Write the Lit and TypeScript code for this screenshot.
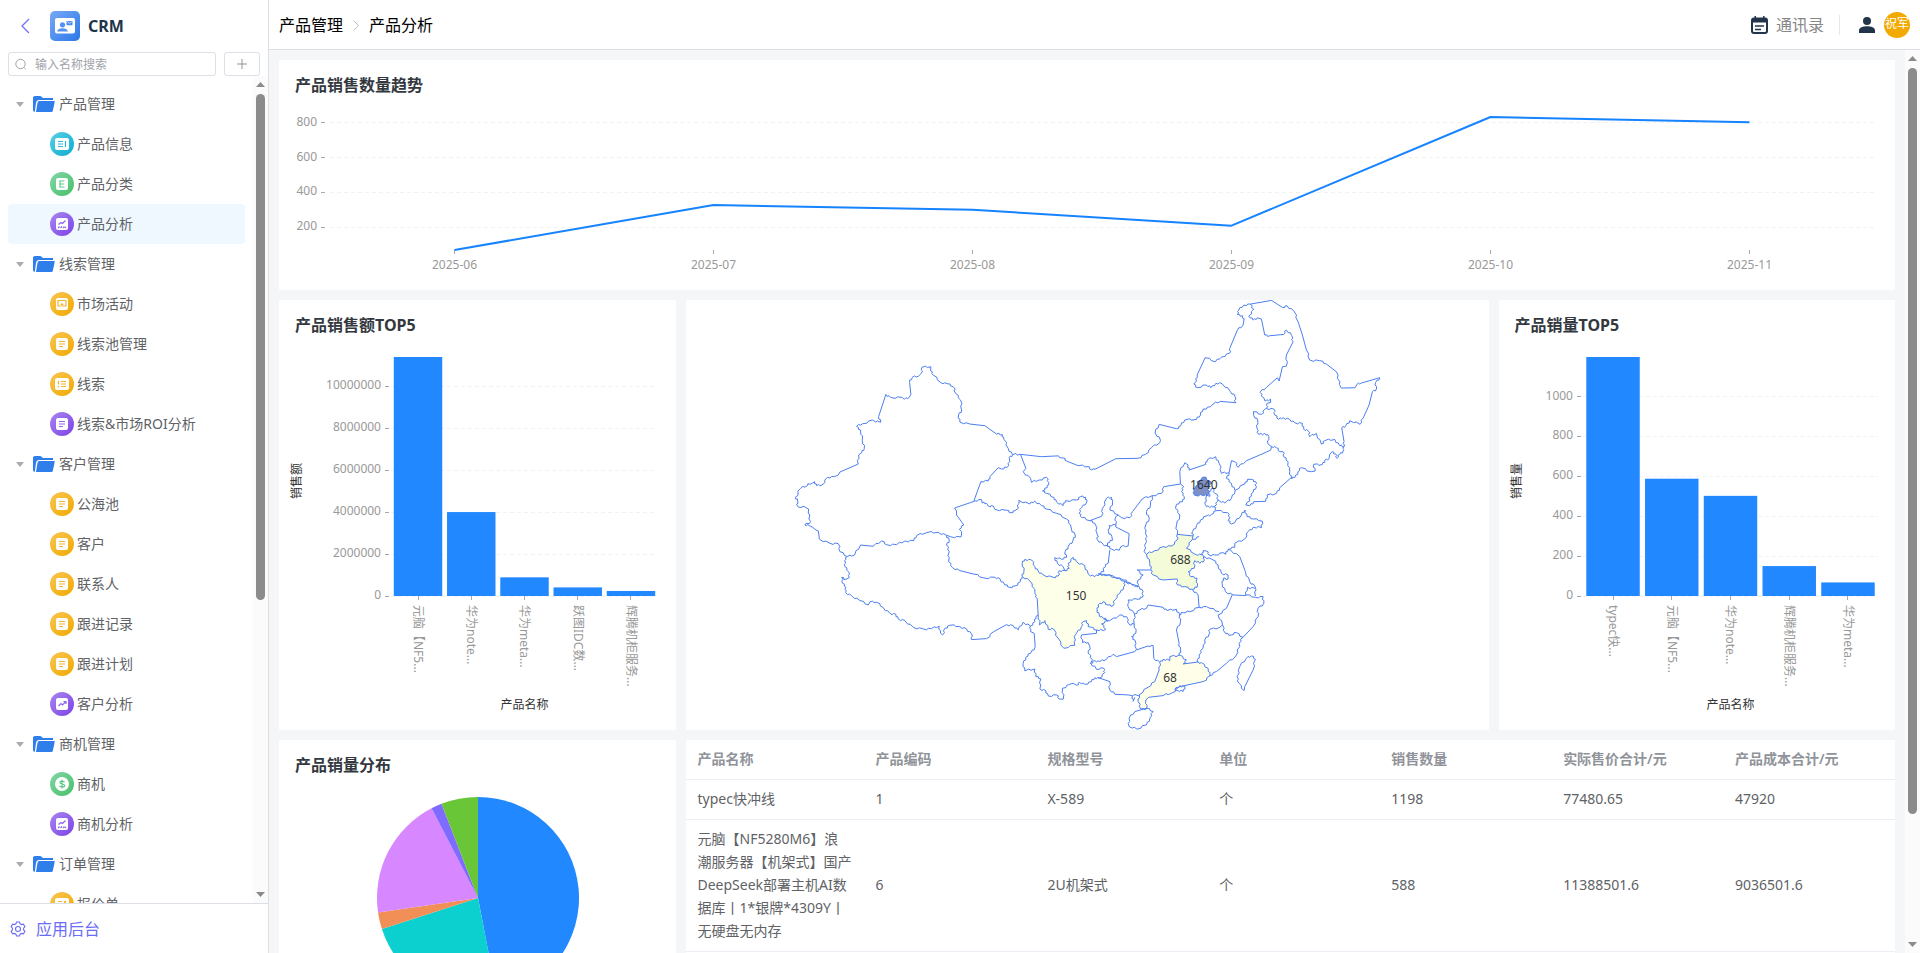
import { LitElement, html, svg, css } from "lit";
import { customElement, property, state } from "lit/decorators.js";
import { classMap } from "lit/directives/class-map.js";

/* ---------- shared chart base: tracks its own size ---------- */

class SizedChart extends LitElement {
  @state() w = 0;
  @state() h = 0;
  private ro?: ResizeObserver;

  connectedCallback() {
    super.connectedCallback();
    this.ro = new ResizeObserver(() => this.measure());
    this.ro.observe(this);
    requestAnimationFrame(() => this.measure());
  }
  disconnectedCallback() {
    this.ro?.disconnect();
    super.disconnectedCallback();
  }
  private measure() {
    this.w = this.clientWidth;
    this.h = this.clientHeight;
  }
}

const chartStyles = css`
  :host {
    display: block;
    flex: 1;
    min-height: 0;
    overflow: hidden;
  }
  svg {
    display: block;
    width: 100%;
    height: 100%;
  }
  text {
    font-size: 12px;
    fill: #999;
  }
  .name {
    fill: #333;
  }
  .grid {
    stroke: #f2f2f2;
    stroke-dasharray: 4 3;
  }
  .tick {
    stroke: #aaa;
  }
  .bar {
    fill: #2288ff;
  }
  .line {
    fill: none;
    stroke: #1683ff;
    stroke-width: 2;
    stroke-linejoin: round;
  }
`;

const crisp = (n: number) => Math.floor(n) + 0.5;

@customElement("trend-chart")
class TrendChart extends SizedChart {
  static styles = chartStyles;
  private months = ["2025-06", "2025-07", "2025-08", "2025-09", "2025-10", "2025-11"];
  private values = [68, 327, 300, 208, 834, 804];

  render() {
    if (!this.w) return html``;
    const left = 46;
    const right = this.w - 16;
    const top = 7;
    const base = this.h - 40;
    const max = Math.max(...this.values);
    const min = Math.min(...this.values);
    const y = (v: number) => top + ((max - v) * (base - top)) / (max - min);
    const step = (right - left) / this.months.length;
    const x = (i: number) => left + step * (i + 0.5);
    return html`<svg role="img" aria-label="产品销售数量趋势">
      ${[200, 400, 600, 800].map(
        (v) => svg`
          <line class="grid" x1=${left + 5} x2=${right - 4} y1=${crisp(y(v))} y2=${crisp(y(v))}></line>
          <line class="tick" x1=${left - 4} x2=${left} y1=${crisp(y(v))} y2=${crisp(y(v))}></line>
          <text x=${left - 8} y=${Math.round(y(v)) + 3} text-anchor="end">${v}</text>`
      )}
      ${this.months.map(
        (m, i) => svg`
          <line class="tick" x1=${crisp(x(i))} x2=${crisp(x(i))} y1=${base} y2=${base + 4}></line>
          <text x=${x(i)} y=${base + 19} text-anchor="middle">${m}</text>`
      )}
      <polyline class="line" points=${this.values.map((v, i) => `${x(i)},${y(v)}`).join(" ")}></polyline>
    </svg>`;
  }
}

interface Item {
  name: string;
  value: number;
}

@customElement("bar-chart")
class BarChart extends SizedChart {
  static styles = chartStyles;
  @property({ attribute: false }) items: Item[] = [];
  @property({ attribute: false }) ticks: number[] = [];
  @property({ type: Number }) inset = 110;
  @property() unit = "";

  render() {
    if (!this.w) return html``;
    const left = this.inset;
    const right = this.w - 16;
    const top = 7;
    const base = this.h - 134;
    const max = Math.max(...this.items.map((d) => d.value));
    const y = (v: number) => base - ((base - top) * v) / max;
    const pad = 0.09;
    const step = (right - left) / (this.items.length + pad);
    const mid = Math.round((base + top) / 2) + 4;
    return html`<svg role="img" aria-label=${this.unit}>
      ${this.ticks.map(
        (v) => svg`
          <line class="grid" x1=${left + 2} x2=${right - 2} y1=${crisp(y(v))} y2=${crisp(y(v))}></line>
          <line class="tick" x1=${left - 4} x2=${left} y1=${crisp(y(v))} y2=${crisp(y(v))}></line>
          <text x=${left - 8} y=${Math.round(y(v)) + 3} text-anchor="end">${v}</text>`
      )}
      ${this.items.map((d, i) => {
        const x = left + step * (i + pad);
        const bw = step * (1 - pad);
        const c = x + bw / 2;
        return svg`
          <rect class="bar" x=${x} y=${y(d.value)} width=${bw} height=${base - y(d.value)}></rect>
          <line class="tick" x1=${crisp(c)} x2=${crisp(c)} y1=${base} y2=${base + 4}></line>
          <text transform="translate(${Math.round(c) - 4} ${base + 9}) rotate(90)">${d.name}</text>`;
      })}
      <text class="name" transform="translate(22 ${mid}) rotate(-90)" text-anchor="middle">${this.unit}</text>
      <text class="name" x=${(left + right) / 2} y=${base + 113} text-anchor="middle">产品名称</text>
    </svg>`;
  }
}

@customElement("pie-chart")
class PieChart extends SizedChart {
  static styles = chartStyles;
  private slices: [number, string][] = [
    [1198, "#2288ff"],
    [588, "#0ccfcf"],
    [68, "#f18f56"],
    [502, "#d787ff"],
    [44, "#7f6bff"],
    [150, "#69c637"],
  ];

  render() {
    if (!this.w) return html``;
    const r = 101;
    const cx = Math.round(this.w / 2);
    const cy = 108;
    const total = this.slices.reduce((s, [v]) => s + v, 0);
    let acc = 0;
    const at = (v: number) => {
      const a = (v / total) * Math.PI * 2;
      return `${(cx + r * Math.sin(a)).toFixed(2)} ${(cy - r * Math.cos(a)).toFixed(2)}`;
    };
    return html`<svg role="img" aria-label="产品销量分布">
      ${this.slices.map(([v, color]) => {
        const from = at(acc);
        acc += v;
        return svg`<path fill=${color} d="M${cx} ${cy}L${from}A${r} ${r} 0 ${v > total / 2 ? 1 : 0} 1 ${at(acc)}Z"></path>`;
      })}
    </svg>`;
  }
}

/* ---------- map of provinces ---------- */

/* Every sheet holds border lines in its own coordinates, shifted by dx, dy. */
const sheets: { dx: number; dy: number; lines: string[] }[] = [
  {
    dx: 0,
    dy: 0,
    lines: [
      "117,720 115,708 108,705 98,697 88,692 75,690 78,685 88,686 92,680 87,672 86,642 78,638 72,634 60,638 53,634 53,618 46,607 54,601 54,588 62,580 82,572 84,566 90,568 98,564 104,560 110,572 126,570 142,547 163,545 175,540 180,531 235,507 236,480 246,472 253,461 247,436 242,405 230,394 248,386 278,375 302,382 296,365 318,298 332,307 367,307 373,313 388,307 393,298 389,262 397,247 416,243 424,235 426,217 453,215 452,227 460,240 482,262 502,266 520,275 527,295 542,315 545,345 536,360 540,381 570,387 615,392 650,417 668,419 672,433 685,460 698,479 722,478 785,485 825,483 850,489 860,498 895,512 928,515 930,522 945,523",
      "698,479 688,488 690,500 682,517 665,522 655,518 630,545 625,558 603,560 583,615 583,619 524,639 530,648 530,660 552,690 538,703 545,710 545,720",
      "583,617 605,614 607,624 620,625 625,633 640,633 645,643 680,646 693,653 705,647 715,640 717,616 750,627 765,618 785,632 800,642 830,655 860,672 872,690 875,702 886,720",
      "722,478 738,520 730,530 752,550 755,562 778,555 800,547 806,562 802,578 788,588 800,595 823,608 830,620 850,632 857,617 890,615 902,605 918,607 921,620 905,638 898,655 905,667 930,677 965,664 968,640 980,610 995,607 998,620 990,645 1015,660",
      "930,677 945,685 953,720 952,733 970,748 983,754",
    ],
  },
  {
    dx: 900,
    dy: 0,
    lines: [
      "45,523 108,491 172,490 197,478 215,458 240,443 242,436 226,414 238,388 290,401 303,392 315,375 350,373 362,360 370,342 392,335 400,327 422,319 468,323 466,305 452,290 427,266 408,265 393,278 380,270 354,278 342,267 350,258 352,240 376,188 407,200 425,186 450,174 450,160 472,107 490,90 492,78 488,62 472,58 477,45 492,30 512,27 575,16 608,37 622,32 642,48 655,80 668,120 680,165 690,195 720,197 740,207 770,230 775,240 773,250 785,279 826,278 832,268 845,264 900,248 888,262 890,282 878,290 868,330 850,370 841,388 810,377 798,392 786,398 793,440 793,455 790,468 780,478 772,490 768,477 757,470 750,478 748,490 735,496 728,508 702,508 706,528 695,530 665,518 655,530 645,548 632,550 600,578 590,595 562,600 558,619 522,620 510,632 498,630 502,622 510,618 508,608 520,592 530,575 528,560 515,553 503,553 495,567 466,586 455,610 440,620 425,622 415,615 412,598 405,595 400,580 388,590",
      "388,590 390,604 380,600 378,612 376,628 390,638 405,633 412,620 415,615",
      "115,660 125,668 150,668 158,650 187,612 217,602 245,595 252,575 302,567",
      "115,660 108,665 108,690 88,692 86,710 96,724 98,736 83,744 83,754 95,762 118,766 123,755 145,753 148,716 108,696 108,690",
      "217,602 212,630 200,650 208,670 198,690 197,715 200,740 193,770 200,778",
      "302,567 312,575 305,590 313,605 308,620 290,628 287,640 300,660 290,690 293,718",
      "302,567 300,530 315,503 325,510 328,525 378,508 382,495 408,485 418,505 425,535 448,533 440,550 455,565 466,586",
      "448,533 455,497 465,500 475,517 500,497 540,480 573,465 575,455",
      "575,453 590,458 600,470 610,470 612,485 625,500 630,530 635,550",
      "575,455 565,447 567,425 555,415 537,418 532,400 534,378 522,362 521,350 545,358 555,343 560,340",
      "560,340 562,325 573,322 572,312 556,318 552,308 541,292 560,277 593,248 598,258 608,215 620,213 620,180 640,140 636,122 620,105 612,118 570,122 555,120 545,72 533,68 520,75 507,63 522,42 512,27",
      "560,340 582,342 585,360 597,373 610,368 630,373 645,383 668,385 672,402 685,407 690,425 710,415 725,447 735,437 765,433 780,452 793,455",
      "402,635 410,647 395,658 380,663 362,675 350,692 338,710 340,723",
      "410,647 443,653 450,668 445,677 455,687 465,683 485,660 496,645 502,665 520,672 547,678 545,698 520,697 505,710 497,730 465,745 465,757 445,763",
    ],
  },
  {
    dx: 0,
    dy: 615,
    lines: [
      "117,105 118,117 150,130 175,131 180,155 202,170 224,165 242,135 280,139 305,123 320,134 350,134 375,123 402,122 410,107 440,98 475,97 500,106 512,110 543,111 545,105",
      "500,106 508,120 500,135 508,155 506,185 518,203 540,212 580,222 612,234 645,232 660,236 675,255 690,262 705,258 722,245 727,230",
      "202,170 194,182 195,200 205,215 208,233 198,238 185,232 188,250 198,262 197,278 215,287 240,302 265,315 270,306 290,307 310,323 330,340 348,343 355,357 375,362 400,382 430,387 455,386 478,379 482,400 488,405 495,385 510,376 540,380 560,387 575,402 575,419 620,416 640,396 680,374 700,377 715,390 730,367 752,378 765,365 768,350 775,345",
      "886,105 880,120 865,140 856,155 860,172 845,178 825,173 833,190 850,200 855,212",
      "752,378 752,395 763,400 766,440 752,460 738,472 730,490 735,513 765,507 768,530 783,537 780,567 798,572 805,588 830,585 838,597 850,598 848,565 870,553 880,550 890,556 900,547 915,553 935,545 945,533 958,535 975,518 972,505 950,508 932,490",
      "950,390 950,400 905,405 908,428 925,428 930,440 925,460 938,480 932,490 945,482 960,485",
    ],
  },
  {
    dx: 900,
    dy: 615,
    lines: [
      "137,245 160,255 178,260 190,275 188,292 175,298 145,300 145,320 163,340 163,372 150,375 140,350 120,345 90,362 72,358",
      "60,485 80,478 100,463 110,470 165,455 170,448 165,420 155,410 168,400 163,372",
      "163,343 180,330 200,325 205,315 250,322 262,332 290,328 300,345 302,365 290,390 298,430 302,450 298,466",
      "170,450 205,438 220,437 222,475 240,487",
      "172,262 175,240 190,225 172,210 213,210",
      "338,268 355,285 358,322 330,335 310,338 298,345",
      "358,322 380,320 390,325 418,335",
      "90,150 85,190 70,205 72,215 55,222 65,222 100,228 130,240 150,248 172,260",
      "340,118 358,110",
      "368,165 370,152 380,153 388,165 405,165 430,158 438,163 445,148 452,150 480,170 497,215 510,245 525,258 527,288",
      "370,168 400,180 415,195 425,220 445,225 445,237 430,235 427,250 437,275 460,285 498,287 503,262 525,265",
      "498,285 527,292 550,290 552,310 535,325 535,350 520,380 490,412 470,398 455,405 437,400 428,375 415,345 440,325 458,283",
      "428,375 420,382 390,388 388,402 375,420 370,445 358,465 352,487",
      "490,412 478,430 480,440 468,468 440,490 410,515 390,528",
      "178,588 145,585 105,583 90,570 90,545 55,533",
      "158,588 160,604 165,592",
      "148,655 165,635 200,625 220,635 210,655 200,675 172,688 148,680 148,655",
      "515,468 527,478 520,510 495,560 493,572 478,550 472,530 480,500 500,475 515,468",
      "285,570 300,557 315,560 310,575 293,572 285,570",
    ],
  },
];

const regions: { fill: string; dx: number; dy: number; line: string }[] = [
  {
    fill: "#feffe9",
    dx: 0,
    dy: 615,
    line: "727,230 732,215 727,190 735,178 755,180 765,200 775,213 790,225 820,232 835,228 838,212 855,212 868,205 865,190 880,172 890,185 915,197 925,222 945,230 960,223 980,225 1005,233 1037,245 1032,260 1020,280 1005,300 1000,317 985,315 970,305 955,315 952,330 958,345 970,355 985,362 965,372 978,388 970,392 950,390 935,382 925,380 920,362 910,365 905,380 890,400 883,410 885,436 852,445 835,415 822,388 805,388 795,362 783,372 779,375 775,345 772,295 765,280 765,268 750,243 727,230",
  },
  {
    fill: "#f4fbd9",
    dx: 900,
    dy: 615,
    line: "200,163 225,152 250,140 275,138 292,120 292,103 340,108 337,120 320,145 345,162 368,165 374,180 360,190 345,182 343,205 325,215 333,230 352,235 352,262 338,268 315,260 293,255 292,237 250,240 220,225 213,208 210,190 200,163",
  },
  {
    fill: "#fffee8",
    dx: 900,
    dy: 615,
    line: "240,487 238,510 225,545 205,562 178,585 175,605 183,628 200,627 198,600 207,592 250,587 275,580 300,560 370,545 390,528 385,505 365,488 350,487 310,492 320,480 300,465 270,470 270,482 250,478 240,487",
  },
  {
    fill: "#7c90c6",
    dx: 900,
    dy: 0,
    line: "340,580 355,570 352,560 362,556 368,547 378,546 382,556 394,560 388,574 386,598 372,602 345,601 340,580",
  },
];

/* Breaks longer straight pieces with a small zigzag, so borders read as natural ones. */
function roughen(line: string, dx: number, dy: number): string {
  const pts = line.split(" ").map((p) => p.split(",").map(Number));
  let d = `M${pts[0][0] + dx} ${pts[0][1] + dy}`;
  for (let i = 1; i < pts.length; i++) {
    const [x0, y0] = pts[i - 1];
    const [x1, y1] = pts[i];
    const len = Math.hypot(x1 - x0, y1 - y0);
    if (len > 13 && len < 36) {
      const side = (x0 * 7 + y0 * 13 + i) % 2 ? 3 : -3;
      const nx = (-(y1 - y0) * side) / len;
      const ny = ((x1 - x0) * side) / len;
      const ax = x0 + (x1 - x0) * 0.4 + nx + dx;
      const ay = y0 + (y1 - y0) * 0.4 + ny + dy;
      const bx = x0 + (x1 - x0) * 0.6 - nx / 2 + dx;
      const by = y0 + (y1 - y0) * 0.6 - ny / 2 + dy;
      d += `L${ax.toFixed(1)} ${ay.toFixed(1)}L${bx.toFixed(1)} ${by.toFixed(1)}`;
    }
    d += `L${x1 + dx} ${y1 + dy}`;
  }
  return d;
}

const mapLabels: [string, number, number][] = [
  ["1640", 1272, 570],
  ["688", 1202, 795],
  ["150", 889, 901],
  ["68", 1171, 1147],
];

@customElement("province-map")
class ProvinceMap extends LitElement {
  static styles = css`
    :host {
      display: block;
      flex: 1;
      min-height: 0;
    }
    svg {
      display: block;
      width: 100%;
      height: 100%;
    }
    path {
      fill: none;
      stroke: #4a7df0;
      stroke-width: 3;
      stroke-linejoin: round;
    }
    text {
      font-size: 36px;
      fill: #333;
      text-anchor: middle;
    }
  `;
  render() {
    return html`<svg viewBox="-282 15 2410 1290" role="img" aria-label="销售区域地图">
      ${regions.map((r) => svg`<path style="fill:${r.fill}" d=${roughen(r.line, r.dx, r.dy)}></path>`)}
      ${sheets.map((s) => svg`<path d=${s.lines.map((l) => roughen(l, s.dx, s.dy)).join("")}></path>`)}
      ${mapLabels.map(([t, x, y]) => svg`<text x=${x} y=${y + 13}>${t}</text>`)}
    </svg>`;
  }
}

/* ---------- navigation ---------- */

type Glyph = "info" | "class" | "area" | "market" | "doc" | "list" | "rise" | "dollar" | "quote";
interface Node {
  label: string;
  tone?: "cyan" | "green" | "purple" | "amber";
  glyph?: Glyph;
  active?: boolean;
}

const tree: Node[] = [
  { label: "产品管理" },
  { label: "产品信息", tone: "cyan", glyph: "info" },
  { label: "产品分类", tone: "green", glyph: "class" },
  { label: "产品分析", tone: "purple", glyph: "area", active: true },
  { label: "线索管理" },
  { label: "市场活动", tone: "amber", glyph: "market" },
  { label: "线索池管理", tone: "amber", glyph: "doc" },
  { label: "线索", tone: "amber", glyph: "list" },
  { label: "线索&市场ROI分析", tone: "purple", glyph: "doc" },
  { label: "客户管理" },
  { label: "公海池", tone: "amber", glyph: "doc" },
  { label: "客户", tone: "amber", glyph: "doc" },
  { label: "联系人", tone: "amber", glyph: "doc" },
  { label: "跟进记录", tone: "amber", glyph: "doc" },
  { label: "跟进计划", tone: "amber", glyph: "doc" },
  { label: "客户分析", tone: "purple", glyph: "rise" },
  { label: "商机管理" },
  { label: "商机", tone: "green", glyph: "dollar" },
  { label: "商机分析", tone: "purple", glyph: "area" },
  { label: "订单管理" },
  { label: "报价单", tone: "amber", glyph: "quote" },
];

const box = svg`<rect x="6" y="6" width="12" height="12" rx="2" fill="#fff" stroke="none"></rect>`;
const wide = svg`<rect x="5" y="6" width="14" height="12" rx="2" fill="#fff" stroke="none"></rect>`;
const glyphs: Record<Glyph, unknown> = {
  info: svg`${wide}<path d="M8 9.500h5M8 12h5M8 14.500h5M15.500 9v6"></path>`,
  class: svg`${box}<path d="M14.500 9h-4.500v6h4.500M10 12h4"></path>`,
  area: svg`${box}<path d="M8.500 12.500l2.500-2 1.500 1 3-3M8 16l1.500-1.500M10.500 16l1.500-1.500M13 16l1.500-1.500M15 16l1-1"></path>`,
  market: svg`${box}<path d="M8 8.500h8v5.500h-8z"></path><path d="M10.500 13c0-2.200 3-2.200 3 0z" fill="currentColor" stroke="none"></path>`,
  doc: svg`${box}<path d="M9 9.500h6M9 12h6M9 14.500h4"></path>`,
  list: svg`${wide}<path d="M8.500 9v3.500M8.500 14v1.500M11 9.500h5M11 12h5M11 14.500h5"></path>`,
  rise: svg`${box}<path d="M8.500 14l2.500-2.500 1.500 1.500 3-3M13.500 9.500h2.500v2.500"></path>`,
  dollar: svg`<circle cx="12" cy="12" r="7" fill="#fff" stroke="none"></circle><path d="M14.500 10.200c-.5-1.500-4.600-1.600-4.600.2 0 2 4.800 1.200 4.800 3.200 0 1.900-4.500 1.800-5.200.1M12 7.500v9"></path>`,
  quote: svg`${wide}<path d="M8 9.500h4M8 12h5M8 14.500h5M15.500 9v5M14 10.500l1.500-1.500"></path>`,
};

@customElement("side-nav")
class SideNav extends LitElement {
  static styles = css`
    :host {
      display: flex;
      flex-direction: column;
      width: 268px;
      flex: none;
      border-right: 1px solid #dcdfe6;
      background: #fff;
    }
    .brand {
      display: flex;
      align-items: center;
      height: 30px;
      padding: 11px 20px;
      font-size: 16px;
      font-weight: 700;
      color: #22344a;
    }
    button {
      font: inherit;
      background: none;
      border: 0;
      padding: 0;
      cursor: pointer;
    }
    .back {
      display: flex;
      width: 30px;
    }
    .brand h1 {
      margin: 0 0 0 8px;
      font-size: 16px;
      line-height: 24px;
    }
    .search {
      display: flex;
      gap: 8px;
      padding: 0 8px;
    }
    .field {
      display: flex;
      align-items: center;
      flex: 1;
      height: 22px;
      min-width: 0;
      border: 1px solid #dcdfe6;
      border-radius: 3px;
      padding: 0 6px;
      gap: 8px;
    }
    .field input {
      flex: 1;
      min-width: 0;
      border: 0;
      outline: 0;
      padding: 0;
      font: inherit;
      font-size: 12px;
      color: #606266;
      background: none;
    }
    .field input::placeholder {
      color: #a0a3a9;
    }
    .add {
      width: 36px;
      height: 24px;
      border: 1px solid #dcdfe6;
      border-radius: 3px;
      display: flex;
      align-items: center;
      justify-content: center;
    }
    .body {
      display: flex;
      flex: 1;
      min-height: 0;
    }
    ul {
      list-style: none;
      margin: 0;
      padding: 8px;
      flex: 1;
      overflow: hidden;
    }
    a {
      display: flex;
      align-items: center;
      height: 40px;
      font-size: 14px;
      color: #606266;
      text-decoration: none;
      border-radius: 4px;
      white-space: nowrap;
    }
    .label {
      padding-bottom: 2px;
    }
    .group {
      padding-left: 8px;
    }
    .caret {
      margin-right: 9px;
    }
    .folder {
      margin-right: 4px;
    }
    .leaf {
      padding-left: 42px;
      gap: 3px;
    }
    .active {
      background: #eff7ff;
    }
    .dot {
      width: 24px;
      height: 24px;
      border-radius: 50%;
      flex: none;
    }
    .dot svg {
      display: block;
      fill: none;
      stroke: currentColor;
      stroke-width: 1.2;
    }
    .cyan {
      background: linear-gradient(135deg, #5cd0e6, #0aacce);
      color: #2bbcd8;
    }
    .green {
      background: linear-gradient(135deg, #85d6a6, #45c068);
      color: #5cc882;
    }
    .purple {
      background: linear-gradient(135deg, #a986f0, #7c42e6);
      color: #9063ea;
    }
    .amber {
      background: linear-gradient(135deg, #f8c654, #f1a800);
      color: #f4b62c;
    }
    .foot {
      height: 49px;
      border-top: 1px solid #dcdfe6;
      padding-left: 10px;
      gap: 10px;
      color: #6a6cf6;
      font-size: 16px;
      border-radius: 0;
    }
  `;

  render() {
    return html`
      <header class="brand">
        <button class="back" aria-label="返回">
          <svg width="10" height="16" viewBox="0 0 10 16" fill="none" stroke="#7272f8" stroke-width="1.3">
            <path d="M9 1L2 8l7 7"></path>
          </svg>
        </button>
        <svg width="30" height="30" viewBox="0 0 30 30">
          <defs>
            <linearGradient id="lg" x1="0" y1="0" x2="1" y2="1">
              <stop offset="0" stop-color="#78a8f6"></stop>
              <stop offset="1" stop-color="#2b78e8"></stop>
            </linearGradient>
          </defs>
          <rect width="30" height="30" rx="5" fill="url(#lg)"></rect>
          <rect x="5" y="7" width="20" height="15.500" rx="2" fill="#fff"></rect>
          <circle cx="12.500" cy="13.800" r="2.600" fill="#5592f0"></circle>
          <path d="M7 20.500c.5-4.500 10.500-4.500 11 0z" fill="#5592f0"></path>
          <rect x="16.500" y="10" width="6" height="4.200" rx=".6" fill="#4a8aee"></rect>
          <path d="M17.300 10.800l2.200 1.500 2.200-1.500" fill="none" stroke="#fff" stroke-width=".7"></path>
        </svg>
        <h1>CRM</h1>
      </header>
      <div class="search">
        <label class="field">
          <svg width="12" height="12" viewBox="0 0 12 12" fill="none" stroke="#a0a3a9">
            <circle cx="5.500" cy="6" r="4.700"></circle>
            <path d="M8.800 9.300l2 2"></path>
          </svg>
          <input type="text" placeholder="输入名称搜索" aria-label="输入名称搜索" />
        </label>
        <button class="add" aria-label="新增">
          <svg width="10" height="10" viewBox="0 0 10 10" stroke="#909399"><path d="M5 0v10M0 5h10"></path></svg>
        </button>
      </div>
      <div class="body">
        <ul>
          ${tree.map(
            (n) => html`<li>
              ${n.glyph
                ? html`<a href="#" class=${classMap({ leaf: true, active: !!n.active })}>
                    <span class="dot ${n.tone}"><svg width="24" height="24">${glyphs[n.glyph]}</svg></span>
                    <span class="label">${n.label}</span>
                  </a>`
                : html`<a href="#" class="group">
                    <svg class="caret" width="8" height="5"><path d="M0 0h8l-4 5z" fill="#a8abb2"></path></svg>
                    <svg class="folder" width="22" height="16" fill="#2f7eea">
                      <path d="M2 0h5.500l2.500 2h10v2H6C4 4 3.500 5 3 7L1.800 15.800C.8 15.800 0 15 0 14V2C0 .800.800 0 2 0z"></path>
                      <path d="M6.500 5H21c.6 0 .8.500.7 1l-1.800 8.500c-.2 1-.9 1.500-1.900 1.500H3L4.600 6.500C4.800 5.500 5.500 5 6.500 5z"></path>
                    </svg>
                    <span class="label">${n.label}</span>
                  </a>`}
            </li>`
          )}
        </ul>
        <scroll-rail thumb="64%"></scroll-rail>
      </div>
      <a class="foot" href="#">
        <svg width="16" height="16" viewBox="0 0 16 16" fill="none" stroke="#6a6cf6" stroke-width="1.100">
          <path d="M6.500 1h3l.6 1.800 1.400.8 1.900-.4 1.500 2.500-1.300 1.500v1.600l1.300 1.500-1.500 2.500-1.900-.4-1.400.8L9.500 15h-3l-.6-1.800-1.400-.8-1.900.4-1.500-2.500 1.300-1.500V7.200L1.100 5.700l1.500-2.500 1.900.4 1.400-.8z"></path>
          <circle cx="8" cy="8" r="2.500"></circle>
        </svg>
        <span class="label">应用后台</span>
      </a>
    `;
  }
}

@customElement("scroll-rail")
class ScrollRail extends LitElement {
  static styles = css`
    :host {
      display: flex;
      flex-direction: column;
      align-items: center;
      width: 15px;
      flex: none;
      background: #fbfbfb;
      padding: 6px 0;
      box-sizing: border-box;
    }
    .track {
      flex: 1;
      margin: 7px 0;
      width: 9px;
    }
    .thumb {
      width: 9px;
      border-radius: 5px;
      background: #8b8b8b;
    }
    svg {
      display: block;
      flex: none;
      fill: #8b8b8b;
    }
  `;
  @property() thumb = "50%";
  render() {
    return html`<svg width="9" height="5"><path d="M0 5l4.500-5L9 5z"></path></svg>
      <div class="track"><div class="thumb" style="height:${this.thumb}"></div></div>
      <svg width="9" height="5"><path d="M0 0l4.500 5L9 0z"></path></svg>`;
  }
}

/* ---------- page ---------- */

const columns = ["产品名称", "产品编码", "规格型号", "单位", "销售数量", "实际售价合计/元", "产品成本合计/元"];
const rows = [
  ["typec快冲线", "1", "X-589", "个", "1198", "77480.65", "47920"],
  [
    "元脑【NF5280M6】浪潮服务器【机架式】国产DeepSeek部署主机AI数据库丨1*银牌*4309Y丨无硬盘无内存",
    "6",
    "2U机架式",
    "个",
    "588",
    "11388501.6",
    "9036501.6",
  ],
];

@customElement("app-root")
class AppRoot extends LitElement {
  static styles = css`
    :host {
      display: flex;
      height: 100vh;
      overflow: hidden;
      background: #fff;
      font-family: "Noto Sans", "Noto Sans CJK SC", sans-serif;
      font-size: 14px;
      color: #303133;
    }
    .main {
      display: flex;
      flex-direction: column;
      flex: 1;
      min-width: 0;
    }
    .top {
      display: flex;
      align-items: center;
      justify-content: space-between;
      height: 49px;
      flex: none;
      border-bottom: 1px solid #dcdfe6;
      padding: 0 10px;
      font-size: 16px;
      line-height: 24px;
    }
    .crumbs,
    .tools,
    .contacts {
      display: flex;
      align-items: center;
    }
    .crumbs {
      gap: 10px;
      color: #000;
    }
    .crumbs a {
      color: inherit;
      text-decoration: none;
    }
    button {
      font: inherit;
      color: inherit;
      background: none;
      border: 0;
      padding: 0;
      cursor: pointer;
      display: flex;
    }
    .contacts {
      gap: 8px;
      color: #888;
      padding-right: 15px;
    }
    .rule {
      border-right: 1px solid #e4e7ed;
      height: 20px;
      margin-right: 19px;
    }
    .avatar {
      width: 26px;
      height: 26px;
      margin-left: 9px;
      border-radius: 50%;
      background: #f2a900;
      color: #fff;
      font-size: 12px;
      line-height: 24px;
      justify-content: center;
    }
    .stage {
      display: flex;
      flex: 1;
      min-height: 0;
      background: #f4f6f8;
    }
    .board {
      flex: 1;
      min-width: 0;
      overflow: hidden;
      display: grid;
      grid-template-columns: repeat(12, minmax(0, 1fr));
      grid-auto-rows: 30px;
      gap: 10px;
      padding: 10px;
      align-content: start;
      box-sizing: border-box;
    }
    .card {
      background: #fff;
      display: flex;
      flex-direction: column;
      min-width: 0;
      overflow: hidden;
      grid-column: span 3;
      grid-row: span 11;
    }
    .trend {
      grid-column: span 12;
      grid-row: span 6;
    }
    .half {
      grid-column: span 6;
    }
    .list {
      grid-column: span 9;
    }
    h2 {
      margin: 0;
      padding: 0 16px;
      font-size: 16px;
      font-weight: 700;
      line-height: 50px;
      color: #33383f;
    }
    table {
      width: 100%;
      table-layout: fixed;
      border-collapse: collapse;
      color: #606266;
      line-height: 23px;
    }
    .first {
      width: 178px;
    }
    th,
    td {
      box-sizing: border-box;
      text-align: left;
      padding: 7px 12px 9px 12px;
      border-bottom: 1px solid #ebeef5;
    }
    th {
      color: #909399;
      font-weight: 600;
    }
  `;

  private bySales: Item[] = [
    { name: "元脑【NF5...", value: 11388501 },
    { name: "华为note...", value: 4000000 },
    { name: "华为meta...", value: 890000 },
    { name: "跃图IDC数...", value: 410000 },
    { name: "辉腾机柜服务...", value: 240000 },
  ];
  private byCount: Item[] = [
    { name: "typec快...", value: 1198 },
    { name: "元脑【NF5...", value: 588 },
    { name: "华为note...", value: 502 },
    { name: "辉腾机柜服务...", value: 150 },
    { name: "华为meta...", value: 68 },
  ];

  render() {
    return html`
      <side-nav></side-nav>
      <div class="main">
        <header class="top">
          <nav class="crumbs">
            <a href="#">产品管理</a>
            <svg width="6" height="12" viewBox="0 0 6 12" fill="none" stroke="#b8bbc2"><path d="M.500 1.500L5.500 6.500l-5 5"></path></svg>
            <a href="#">产品分析</a>
          </nav>
          <div class="tools">
            <button class="contacts">
              <svg width="17" height="18" viewBox="0 0 17 18">
                <rect x="1" y="2.500" width="15" height="14.500" rx="2" fill="none" stroke="#22344a" stroke-width="2"></rect>
                <path d="M1 2.500h15v4H1zM3.500 0h1.500v3H3.500zM12 0h1.500v3H12z" fill="#22344a"></path>
                <path d="M4 10h9M4 13.500h6" stroke="#22344a" stroke-width="1.600"></path>
              </svg>
              通讯录
            </button>
            <span class="rule"></span>
            <button aria-label="个人">
              <svg width="16" height="16" viewBox="0 0 16 16" fill="#22344a">
                <circle cx="8" cy="4" r="4"></circle>
                <path d="M0 16v-2.500C0 10.500 4 9.300 8 9.300s8 1.200 8 4.200V16z"></path>
              </svg>
            </button>
            <button class="avatar">祝军</button>
          </div>
        </header>
        <div class="stage">
          <main class="board">
            <section class="card trend">
              <h2>产品销售数量趋势</h2>
              <trend-chart></trend-chart>
            </section>
            <section class="card">
              <h2>产品销售额TOP5</h2>
              <bar-chart
                unit="销售额"
                .inset=${110}
                .items=${this.bySales}
                .ticks=${[0, 2000000, 4000000, 6000000, 8000000, 10000000]}
              ></bar-chart>
            </section>
            <section class="card half"><province-map></province-map></section>
            <section class="card">
              <h2>产品销量TOP5</h2>
              <bar-chart
                unit="销售量"
                .inset=${82}
                .items=${this.byCount}
                .ticks=${[0, 200, 400, 600, 800, 1000]}
              ></bar-chart>
            </section>
            <section class="card">
              <h2>产品销量分布</h2>
              <pie-chart></pie-chart>
            </section>
            <section class="card list">
              <table>
                <thead>
                  <tr>
                    ${columns.map((c, i) => html`<th scope="col" class=${i ? "" : "first"}>${c}</th>`)}
                  </tr>
                </thead>
                <tbody>
                  ${rows.map((r) => html`<tr>${r.map((c) => html`<td>${c}</td>`)}</tr>`)}
                </tbody>
              </table>
            </section>
          </main>
          <scroll-rail thumb="86%"></scroll-rail>
        </div>
      </div>
    `;
  }
}
